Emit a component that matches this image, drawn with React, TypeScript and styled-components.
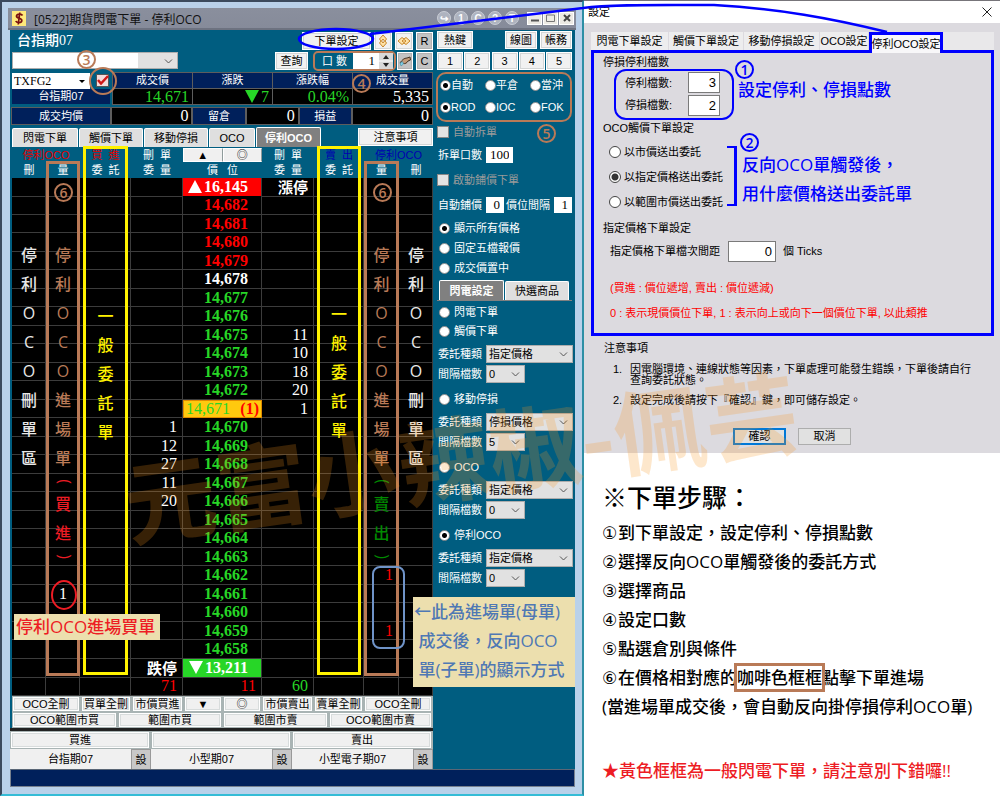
import React from "react";
import styled, { createGlobalStyle, css } from "styled-components";

const TEAL = "#005d80";
const NAVY = "#00205b";
const BROWN = "#b97a57";
const BLUE = "#0000ff";
const YELLOW = "#fff200";
const RED = "#ff0000";
const GREEN = "#27d627";
const LADDER_COLUMNS = "34fr 34fr 51fr 52fr 79fr 52fr 50fr 35fr 34fr";

const ui = `"Liberation Sans", "Noto Sans CJK TC", sans-serif`;
const note = `"Open Sans", "Noto Sans CJK TC", sans-serif`;
const digits = `"Liberation Serif", "Noto Sans CJK TC", serif`;

const GlobalStyle = createGlobalStyle`
  * { box-sizing: border-box; }
  body { margin: 0; background: #fff; }
  button, input, select { font: inherit; margin: 0; padding: 0; border-radius: 0; }
  ul, ol { list-style: none; margin: 0; padding: 0; }
  h1, h2, p { margin: 0; }
`;

const Stage = styled.div`
  position: relative;
  display: grid;
  grid-template-columns: minmax(0, 584fr) minmax(0, 416fr);
  min-height: 100vh;
  overflow: hidden;
  font: 11px/16px ${ui};
`;

/* ---------- trading window ---------- */

const Window = styled.section`
  position: relative;
  display: flex;
  flex-direction: column;
  background: #b9d1ea;
  border: 2px solid #3b4a5e;
  border-right-color: #2d8fa5;
  border-bottom-color: #35bcd6;
  padding: 6px;
`;

const TitleBar = styled.header`
  display: flex;
  align-items: center;
  height: 22px;
  padding: 0 2px 0 4px;
  background: linear-gradient(#8a8f9d, #868b9a);
  border-bottom: 2px solid #6d7280;
`;

const AppIcon = styled.svg`
  width: 14px;
  height: 15px;
  margin-right: 8px;
`;

const WindowTitle = styled.h1`
  flex: 1;
  font: 400 12px/18px ${note};
  padding-top: 4px;
  color: #111;
  white-space: nowrap;
`;

const TitleTools = styled.div`
  display: flex;
  gap: 3px;
`;

const RoundTool = styled.button`
  width: 14px;
  height: 14px;
  border: 1px solid #c9cdd6;
  border-radius: 50%;
  background: #aeb3bf;
  color: #fff;
  font-size: 10px;
  font-weight: 700;
  line-height: 11px;
  text-align: center;
`;

const CaptionButton = styled.button`
  display: grid;
  place-items: center;
  width: 15px;
  height: 13px;
  border: 1px solid #fff;
  background: #eceae4;
  color: #555;
`;

const CaptionGroup = styled.div`
  display: flex;
  gap: 1px;
  margin-left: 8px;
`;

const Body = styled.div`
  display: grid;
  grid-template-columns: minmax(0, 424fr) minmax(0, 141fr);
  margin: 0 1px 0 2px;
  background: ${TEAL};
`;

const StatusBar = styled.footer`
  height: 18px;
  margin: 0 1px 0 2px;
  background: ${NAVY};
  border: 1px solid #77818f;
  border-top-color: #5a6676;
`;

const Main = styled.div`
  display: flex;
  flex-direction: column;
  min-width: 0;
`;

const Bar = styled.div<{ $height: number; $top?: number }>`
  display: flex;
  align-items: center;
  height: ${(p) => p.$height}px;
  margin-top: ${(p) => p.$top ?? 2}px;
  padding: 0 1px 0 2px;
`;

const Product = styled.h2`
  flex: 1;
  padding-left: 5px;
  color: #fff;
  font: 500 14px/18px ${digits};
`;

const Spacer = styled.div`
  flex: 1;
`;

const Button = styled.button<{ $width?: number; $gray?: boolean; $gap?: number }>`
  display: inline-flex;
  align-items: center;
  justify-content: center;
  flex: none;
  width: ${(p) => (p.$width ? p.$width + "px" : "auto")};
  height: 18px;
  margin-left: ${(p) => p.$gap ?? 3}px;
  border: 1px solid #fff;
  background: ${(p) => (p.$gray ? "#c3c3c3" : "#f1f1f1")};
  box-shadow: inset 0 0 0 1px ${(p) => (p.$gray ? "#b2b2b2" : "#d4d6d6")};
  color: #000;
  line-height: 14px;
  white-space: nowrap;
`;

const AccountSelect = styled.div`
  position: relative;
  width: 166px;
  height: 17px;
  background: #e1e1e1;
  border: 1px solid #adadad;
`;

const SelectBox = styled.select`
  display: block;
  width: 100%;
  height: 100%;
  appearance: none;
  border: 0;
  background: transparent;
  padding: 0 2px;
  color: #000;
  line-height: 14px;
`;

const AccountField = styled(SelectBox)`
  background: linear-gradient(90deg, #fff 125px, transparent 125px);
`;

const Chevron = styled.svg`
  position: absolute;
  right: 4px;
  top: 5px;
  width: 9px;
  height: 7px;
  pointer-events: none;
`;

const LotBox = styled.label`
  display: flex;
  align-items: center;
  height: 20px;
  margin-left: 5px;
  padding: 0 1px 0 7px;
  border: 2px solid ${BROWN};
  border-radius: 5px;
  color: #fff;
  gap: 6px;
`;

const Spinner = styled.span`
  display: flex;
  height: 16px;
  background: #fff;
`;

const NumberField = styled.input<{ $width: number; $height?: number }>`
  width: ${(p) => p.$width}px;
  height: ${(p) => p.$height ?? 16}px;
  padding: 0 3px;
  border: 1px solid #fff;
  background: #fff;
  color: #000;
  font: 13px/14px ${digits};
  text-align: right;
`;

const SpinButtons = styled.svg`
  width: 14px;
  height: 16px;
`;

const SymbolCell = styled.div`
  display: flex;
  align-items: center;
  width: 98px;
  height: 17px;
`;

const SymbolSelect = styled.div`
  position: relative;
  width: 78px;
  height: 16px;
  margin-right: 6px;
  background: #fff;
  font: 12px/14px ${digits};
`;

const CheckMark = styled.input`
  appearance: none;
  flex: none;
  width: 13px;
  height: 13px;
  border: 1px solid #555;
  background: #f3dcdc;
`;

const CheckStroke = styled.svg`
  position: absolute;
  left: 95px;
  top: 73px;
  width: 12px;
  height: 10px;
  pointer-events: none;
`;

const QuoteArea = styled.div`
  display: grid;
  grid-template-columns: 100fr 321fr;
  height: 33px;
  margin: 2px 1px 0 2px;
`;

const SymbolColumn = styled.div`
  display: flex;
  flex-direction: column;
`;

const NavyLabel = styled.div`
  height: 15px;
  margin-right: 2px;
  background: ${NAVY};
  color: #fff;
  line-height: 15px;
  text-align: center;
`;

const QuoteTable = styled.table`
  width: 100%;
  table-layout: fixed;
  border-collapse: collapse;
  th, td { border: 1px solid #5d5d5d; padding: 0 3px; height: 16px; }
  th { background: ${NAVY}; color: #fff; font-weight: 400; line-height: 15px; }
  td { background: #000; font: 16px/15px ${digits}; text-align: right; }
`;

const Quote = styled.td<{ $color: string }>`
  color: ${(p) => p.$color};
`;

const Stats = styled.dl`
  display: grid;
  grid-template-columns: 100fr 81fr 53fr 53fr 53fr 81fr;
  height: 18px;
  margin: 2px 1px 0;
  dt { background: ${NAVY}; color: #fff; text-align: center; border: 1px solid #5d5d5d; line-height: 16px; }
  dd { margin: 0; padding-right: 3px; background: #000; color: #fff; text-align: right; border: 1px solid #5d5d5d; font: 16px/16px ${digits}; }
`;

const Tab = styled.button<{ $width: number; $active?: boolean }>`
  width: ${(p) => p.$width}px;
  height: ${(p) => (p.$active ? 20 : 19)}px;
  align-self: flex-end;
  border: 1px solid #fff;
  border-bottom: 0;
  border-radius: 2px 2px 0 0;
  margin-right: 1px;
  background: ${(p) => (p.$active ? "#808080" : "#dfdfdf")};
  color: ${(p) => (p.$active ? "#fff" : "#000")};
  font-weight: ${(p) => (p.$active ? 700 : 400)};
  white-space: nowrap;
`;

/* ---------- price ladder ---------- */

const LadderBox = styled.div`
  position: relative;
  margin: 1px 1px 0 2px;
  background: #000;
`;

const Ladder = styled.table`
  display: block;
  width: 100%;
  thead, tbody { display: block; }
  tr { display: grid; grid-template-columns: ${LADDER_COLUMNS}; height: 19px; }
  tbody tr:nth-child(odd) { height: 18px; }
  tbody tr:last-child { height: 19px; }
  thead tr { height: 15px; background: ${TEAL}; }
  th { padding: 0; color: #fff; font-weight: 400; line-height: 15px; white-space: pre; }
`;

const Head = styled.th<{ $color?: string; $span?: number }>`
  && {
    grid-column: span ${(p) => p.$span ?? 1};
    color: ${(p) => p.$color ?? "#fff"};
  }
`;

const PriceHead = styled.th`
  display: flex;
`;

const HeadButton = styled.button`
  flex: 1;
  height: 14px;
  border: 1px solid #fff;
  border-right-color: #8f9b9b;
  background: #f0f0f0;
  color: #000;
  line-height: 11px;
`;

const Cell = styled.td<{ $color?: string }>`
  padding: 0 5px 0 0;
  border: solid #3c3c3c;
  border-width: 0 1px 1px 0;
  color: ${(p) => p.$color ?? "#fff"};
  font: 500 16px/17px ${digits};
  text-align: right;
  white-space: nowrap;
`;

const CountCell = styled(Cell)<{ $side: "left" | "right" }>`
  padding-right: ${(p) => (p.$side === "left" ? 12 : 5)}px;
`;

const LimitText = styled.b`
  font: 700 15px/17px "Noto Sans CJK TC", sans-serif;
`;

const PriceCell = styled(Cell)<{ $bg?: string }>`
  padding-right: 13px;
  background: ${(p) => p.$bg ?? "#000"};
  font-weight: 700;
`;

const LastPrice = styled(PriceCell)`
  display: flex;
  justify-content: space-between;
  padding: 0 2px;
  border: 1px solid #e08a00;
  font-weight: 400;
  line-height: 16px;
  b { color: #f00; }
`;

const Arrow = styled.svg`
  width: 14px;
  height: 13px;
  margin-right: 2px;
  vertical-align: -1px;
`;

const Overlay = styled.div`
  position: absolute;
  inset: -2px 0 0 0;
  display: grid;
  grid-template-columns: ${LADDER_COLUMNS};
  pointer-events: none;
`;

const Lane = styled.div<{ $col: number; $color: string; $frame?: "wide" | "narrow"; $start: number }>`
  grid-column: ${(p) => p.$col};
  grid-row: 1;
  display: flex;
  flex-direction: column;
  align-items: center;
  margin: ${(p) => (p.$frame === "wide" ? "0 3px 21px" : "15px 0 20px")};
  border: 3px solid ${(p) => (p.$frame ? p.$color : "transparent")};
  padding-top: ${(p) => p.$start}px;
  color: ${(p) => p.$color};
  font: 500 16px/29px ${note};
`;

const Glyph = styled.span<{ $color?: string }>`
  height: 29px;
  color: ${(p) => p.$color ?? "inherit"};
`;

const Paren = styled.span<{ $color: string }>`
  height: 17px;
  width: 17px;
  line-height: 15px;
  text-align: center;
  transform: rotate(90deg);
  color: ${(p) => p.$color};
`;

const ButtonRow = styled.div<{ $columns: string; $height: number }>`
  display: grid;
  grid-template-columns: ${(p) => p.$columns};
  height: ${(p) => p.$height}px;
`;

const LadderButton = styled.button`
  min-width: 0;
  border: solid #a9b4b4;
  border-width: 1px 2px 1px 1px;
  background: #f0f0f0;
  box-shadow: inset 0 0 0 1px #fff, inset 0 0 0 2px #d8dcdc;
  color: #000;
  line-height: 12px;
  white-space: nowrap;
`;

const LadderFoot = styled.div`
  margin: 0 1px 0 2px;
`;

const OrderArea = styled.div`
  margin-right: 1px;
  border-top: 3px solid #222;
`;

const QuickProduct = styled.div`
  display: grid;
  grid-template-columns: 1fr 20px;
  background: #f0f0f0;
  text-align: center;
  line-height: 20px;
  button { border: 1px solid #999; background: #c8c8c8; }
`;

/* ---------- right settings column ---------- */

const Side = styled.aside`
  position: relative;
  display: flex;
  flex-direction: column;
  padding: 1px 3px 0 3px;
  color: #fff;
`;

const SideBar = styled.div<{ $top?: number; $height?: number }>`
  display: flex;
  align-items: center;
  justify-content: space-between;
  height: ${(p) => p.$height ?? 18}px;
  margin-top: ${(p) => p.$top ?? 0}px;
`;

const ConditionBox = styled.div`
  display: grid;
  grid-template-columns: 45fr 45fr 40fr;
  align-content: space-between;
  height: 50px;
  margin: 1px 0 0 -1px;
  padding: 2px 0 4px 2px;
  border: 2px solid ${BROWN};
  border-radius: 10px;
`;

const radioDot = css`
  &:checked { background: radial-gradient(circle, #000 2px, #fff 3px); }
`;

const Radio = styled.input`
  appearance: none;
  flex: none;
  width: 11px;
  height: 11px;
  border: 1px solid #8d8d8d;
  border-radius: 50%;
  background: #fff;
  ${radioDot}
`;

const Choice = styled.label<{ $height?: number; $gap?: number; $dim?: boolean }>`
  display: flex;
  align-items: center;
  gap: ${(p) => p.$gap ?? 0}px;
  height: ${(p) => p.$height ?? 18}px;
  color: ${(p) => (p.$dim ? "#9a9a9a" : "#fff")};
  white-space: nowrap;
`;

const Tick = styled.input`
  appearance: none;
  width: 12px;
  height: 12px;
  border: 1px solid #888;
  background: #e3e3e3;
`;

const SideField = styled.label<{ $height?: number }>`
  display: flex;
  align-items: center;
  gap: 4px;
  height: ${(p) => p.$height ?? 20}px;
  padding-left: 1px;
  white-space: nowrap;
`;

const SideSelect = styled.span<{ $wide?: boolean }>`
  position: relative;
  flex: ${(p) => (p.$wide ? "1" : "none")};
  width: 39px;
  height: 18px;
  border: 1px solid #adadad;
  background: #e1e1e1;
`;

const SideTabs = styled.div`
  display: flex;
  height: 18px;
  padding-left: 2px;
  border-bottom: 1px solid #808080;
  margin: 2px 0 4px;
`;

const RadioGroup = styled.div`
  padding: 0 0 3px 2px;
`;

const ModeFirst = styled.div`
  padding: 0 0 3px 2px;
  margin-bottom: -3px;
`;

const Fields = styled.div`
  margin: 1px -1px 0 -2px;
`;

/* ---------- call-outs ---------- */

const Badge = styled.span<{ $x: number; $y: number; $color: string }>`
  position: absolute;
  left: ${(p) => p.$x}px;
  top: ${(p) => p.$y}px;
  width: 19px;
  height: 19px;
  border: 2px solid ${(p) => p.$color};
  border-radius: 50%;
  color: ${(p) => p.$color};
  font: 600 14px/15px ${note};
  text-align: center;
  pointer-events: none;
`;

const Ring = styled.span<{ $x: number; $y: number; $w: number; $h: number; $color: string; $radius?: string }>`
  position: absolute;
  left: ${(p) => p.$x}px;
  top: ${(p) => p.$y}px;
  width: ${(p) => p.$w}px;
  height: ${(p) => p.$h}px;
  border: 2px solid ${(p) => p.$color};
  border-radius: ${(p) => p.$radius ?? "50%"};
  pointer-events: none;
`;

const BuyNote = styled.p`
  position: absolute;
  left: 2px;
  bottom: 56px;
  padding: 0 5px 0 2px;
  background: #ecdfae;
  color: #ed1c24;
  font: 500 17px/26px ${note};
  white-space: nowrap;
`;

const FillNote = styled.p`
  position: absolute;
  right: 0;
  top: 567px;
  width: 162px;
  padding: 0 0 3px 5px;
  background: #ecdfae;
  color: #4f78b4;
  font: 500 17px/29px ${note};
  white-space: nowrap;
  text-indent: -4px;
`;

const NoteLine = styled.span`
  display: block;
`;

const Connector = styled.svg`
  position: absolute;
  left: 0;
  top: 0;
  width: 100%;
  height: 60px;
  z-index: 2;
  pointer-events: none;
`;

const Watermark = styled.div`
  position: absolute;
  left: 46%;
  top: 453px;
  transform: translate(-50%, -50%) rotate(-8deg);
  color: #fa961e;
  opacity: 0.22;
  font: 700 92px/100px "Noto Sans CJK TC", sans-serif;
  white-space: nowrap;
  pointer-events: none;
`;

/* ---------- settings dialog ---------- */

const RightColumn = styled.div`
  min-width: 0;
`;

const Dialog = styled.section`
  height: 453px;
  border-top: 1px solid #77757a;
  background: #dcdadf;
  color: #000;
`;

const DialogTitle = styled.header`
  display: flex;
  align-items: center;
  justify-content: space-between;
  height: 22px;
  padding: 0 8px 0 4px;
  background: #fff;
`;

const CloseButton = styled.button`
  width: 10px;
  height: 10px;
  border: 0;
  background: none;
  svg { display: block; }
`;

const DialogTabs = styled.div`
  position: relative;
  z-index: 1;
  display: flex;
  align-items: flex-start;
  height: 30px;
  margin: 0 6px 0 7px;
  padding-top: 9px;
`;

const DialogTab = styled.button<{ $width: number; $active?: boolean }>`
  width: ${(p) => p.$width}px;
  height: ${(p) => (p.$active ? 21 : 18)}px;
  border: ${(p) => (p.$active ? `3px solid ${BLUE}` : "solid #dcdadf")};
  border-width: ${(p) => (p.$active ? "3px 3px 0" : "0 1px 0 0")};
  background: ${(p) => (p.$active ? "#f8f7f9" : "#ededee")};
  color: #000;
  line-height: ${(p) => (p.$active ? 12 : 18)}px;
  white-space: nowrap;
`;

const TabLabel = styled.span`
  display: flex;
  justify-content: center;
`;

const TabRest = styled.div`
  flex: 1;
  height: 18px;
  background: #e9e8ea;
`;

const Panel = styled.div`
  position: relative;
  height: 286px;
  margin: -3px 6px 0 7px;
  padding: 1px 0 0 9px;
  border: 3px solid ${BLUE};
`;

const GroupTitle = styled.h2`
  font: 400 11px/16px ${ui};
`;

const TickFields = styled.div`
  width: 120px;
  height: 51px;
  margin: -1px 0 0 11px;
  padding: 0 0 0 9px;
  border: 2px solid ${BLUE};
  border-radius: 12px;
`;

const DialogField = styled.label<{ $label: number; $height: number }>`
  display: grid;
  grid-template-columns: ${(p) => p.$label}px auto 1fr;
  align-items: center;
  height: ${(p) => p.$height}px;
  white-space: nowrap;
`;

const DialogInput = styled(NumberField)`
  border: 1px solid #7a7a7a;
  font: 13px/18px ${ui};
`;

const ChoiceBlock = styled.div`
  padding: 3px 0 6px;
`;

const DialogChoice = styled(Choice)`
  color: #000;
  height: 25px;
  padding-left: 6px;
  gap: 3px;
`;

const DialogRadio = styled(Radio)`
  width: 12px;
  height: 12px;
  border-color: #444;
  &:checked { background: radial-gradient(circle, #333 3px, #fff 4px); }
`;

const Indent = styled.div`
  padding-left: 7px;
`;

const Unit = styled.span`
  padding-left: 7px;
`;

const RedBlock = styled.div`
  padding-top: 10px;
`;

const RedText = styled.p`
  padding-left: 7px;
  color: #f00;
  line-height: 25px;
  white-space: nowrap;
`;

const Remark = styled.div<{ $x: number; $y: number }>`
  position: absolute;
  left: ${(p) => p.$x}px;
  top: ${(p) => p.$y}px;
  color: ${BLUE};
  font: 500 17px/29px ${note};
  white-space: nowrap;
`;

const Bracket = styled.span`
  position: absolute;
  left: 133px;
  top: 93px;
  width: 10px;
  height: 60px;
  border: solid ${BLUE};
  border-width: 2px 3px 2px 0;
`;

const Cautions = styled.div`
  padding: 4px 24px 0 20px;
`;

const CautionList = styled.ol`
  padding: 8px 0 0 9px;
  line-height: 11px;
  li { display: grid; grid-template-columns: 17px 1fr; margin-bottom: 9px; }
`;

const DialogActions = styled.div`
  display: flex;
  justify-content: center;
  gap: 12px;
  padding-top: 13px;
`;

const ActionButton = styled.button<{ $primary?: boolean }>`
  width: 53px;
  height: 17px;
  border: ${(p) => (p.$primary ? "2px solid #0078d7" : "1px solid #adadad")};
  background: #e1e1e1;
  color: #000;
  line-height: 13px;
`;

/* ---------- written steps ---------- */

const Steps = styled.article`
  padding: 24px 0 0 18px;
  color: #000;
  font: 500 17px/29px ${note};
  white-space: nowrap;
`;

const StepsTitle = styled.h2`
  font: 500 25px/40px ${note};
  margin-bottom: 1px;
`;

const StepNumber = styled.span`
  display: inline-block;
  width: 16px;
  font: 500 17px/20px "DejaVu Sans", sans-serif;
`;

const Boxed = styled.span`
  outline: 3px solid ${BROWN};
  outline-offset: 0;
`;

const Warning = styled.p`
  margin-top: 35px;
  color: #ed1c24;
`;

/* ---------- data ---------- */

type Row = { price: string; color: string; bid?: string; ask?: string };

const bids: Record<number, string> = { 14670: "1", 14669: "12", 14668: "27", 14667: "11", 14666: "20" };
const asks: Record<number, string> = { 14675: "11", 14674: "10", 14673: "18", 14672: "20", 14671: "1" };

const rows: Row[] = Array.from({ length: 25 }, (_, i) => {
  const value = 14682 - i;
  return {
    price: value.toLocaleString("en-US"),
    color: value > 14678 ? RED : value === 14678 ? "#fff" : GREEN,
    bid: bids[value],
    ask: asks[value],
  };
});

const triggerGroups = [
  { name: "觸價下單", kind: "指定價格", ticks: "0" },
  { name: "移動停損", kind: "停損價格", ticks: "5" },
  { name: "OCO", kind: "指定價格", ticks: "0" },
  { name: "停利OCO", kind: "指定價格", ticks: "0" },
];

const Down = () => (
  <Chevron viewBox="0 0 9 7" fill="none" stroke="#555">
    <path d="M1 1.5 4.5 5 8 1.5" />
  </Chevron>
);

const Diamond = ({ wide }: { wide?: boolean }) => (
  <svg width="14" height="14" viewBox="0 0 14 14" fill="#ffe3a8" stroke="#c8862a">
    {wide ? (
      <path d="M1 7 5 3.5 7 5 9 3.5 13 7 9 10.5 7 9 5 10.5Z M5 7 7 5.5 9 7 7 8.5Z" />
    ) : (
      <path d="M7 1 10.500 5 9 7 10.500 9 7 13 3.500 9 5 7 3.500 5Z M7 5 5.500 7 7 9 8.500 7Z" />
    )}
  </svg>
);

const Triangle = ({ up, color }: { up?: boolean; color: string }) => (
  <Arrow viewBox="0 0 14 13" fill={color}>
    <path d={up ? "M7 0 14 13H0Z" : "M0 0H14L7 13Z"} />
  </Arrow>
);

const LadderRow = ({ row }: { row: Row }) => (
  <tr>
    <Cell />
    <CountCell $side="left">{row.price === "14,661" ? "1" : ""}</CountCell>
    <Cell />
    <Cell>{row.bid}</Cell>
    {row.price === "14,671" ? (
      <LastPrice $color={GREEN} $bg="#ffc90e">
        {row.price}
        <b>(1)</b>
      </LastPrice>
    ) : (
      <PriceCell $color={row.color}>{row.price}</PriceCell>
    )}
    <Cell>{row.ask}</Cell>
    <Cell />
    <CountCell $side="right" $color={RED}>
      {row.price === "14,662" || row.price === "14,659" ? "1" : ""}
    </CountCell>
    <Cell />
  </tr>
);

const Letters = ({ text, color }: { text: string; color?: string }) => (
  <>
    {Array.from(text).map((ch, i) => (
      <Glyph key={i} $color={color}>
        {ch}
      </Glyph>
    ))}
  </>
);

const EntryLane = ({ col, side, color }: { col: number; side: string; color: string }) => (
  <Lane $col={col} $color={BROWN} $frame="narrow" $start={77}>
    <Letters text="停利OCO進場單" />
    <Paren $color={color}>(</Paren>
    <Letters text={side} color={color} />
    <Paren $color={color}>)</Paren>
  </Lane>
);

const SidePanel = () => (
  <Side>
    <SideBar>
      <Button $width={36} $gap={0}>熱鍵</Button>
      <Spacer />
      <Button $width={32}>線圖</Button>
      <Button $width={32}>帳務</Button>
    </SideBar>
    <SideBar $top={2} $height={20}>
      {["1", "2", "3", "4", "5"].map((n) => (
        <Button key={n} $width={26} $gap={0}>{n}</Button>
      ))}
    </SideBar>
    <ConditionBox>
      {["自動", "平倉", "當沖"].map((t) => (
        <Choice key={t}>
          <Radio type="radio" name="position" defaultChecked={t === "自動"} />
          {t}
        </Choice>
      ))}
      {["ROD", "IOC", "FOK"].map((t) => (
        <Choice key={t}>
          <Radio type="radio" name="validity" defaultChecked={t === "ROD"} />
          {t}
        </Choice>
      ))}
    </ConditionBox>
    <Choice $height={20} $gap={4} $dim>
      <Tick type="checkbox" disabled />
      自動拆單
    </Choice>
    <SideField $height={26}>
      拆單口數
      <NumberField $width={27} defaultValue="100" />
    </SideField>
    <Choice $height={24} $gap={4} $dim>
      <Tick type="checkbox" disabled />
      啟動鋪價下單
    </Choice>
    <SideBar $height={26}>
      <SideField>
        自動鋪價
        <NumberField $width={18} defaultValue="0" />
      </SideField>
      <SideField>
        價位間隔
        <NumberField $width={18} defaultValue="1" />
      </SideField>
    </SideBar>
    <RadioGroup>
      {["顯示所有價格", "固定五檔報價", "成交價置中"].map((t, i) => (
        <Choice key={t} $height={20} $gap={4}>
          <Radio type="radio" name="view" defaultChecked={i === 0} />
          {t}
        </Choice>
      ))}
    </RadioGroup>
    <SideTabs>
      <Tab $width={65} $active>閃電設定</Tab>
      <Tab $width={64}>快選商品</Tab>
    </SideTabs>
    <ModeFirst>
      <Choice $height={14} $gap={4}>
        <Radio type="radio" name="mode" />
        閃電下單
      </Choice>
    </ModeFirst>
    {triggerGroups.map((g) => (
      <RadioGroup key={g.name}>
        <Choice $height={24} $gap={4}>
          <Radio type="radio" name="mode" defaultChecked={g.name === "停利OCO"} />
          {g.name}
        </Choice>
        <Fields>
          <SideField>
            委託種類
            <SideSelect $wide>
              <SelectBox>
                <option>{g.kind}</option>
              </SelectBox>
              <Down />
            </SideSelect>
          </SideField>
          <SideField>
            間隔檔數
            <SideSelect>
              <SelectBox>
                <option>{g.ticks}</option>
              </SelectBox>
              <Down />
            </SideSelect>
          </SideField>
        </Fields>
      </RadioGroup>
    ))}
    <Badge $x={103} $y={94} $color={BROWN}>5</Badge>
    <FillNote>
      <NoteLine>←此為進場單(母單)</NoteLine>
      <NoteLine>&nbsp;成交後，反向OCO</NoteLine>
      <NoteLine>&nbsp;單(子單)的顯示方式</NoteLine>
    </FillNote>
  </Side>
);

const TradingWindow = () => (
  <Window>
    <TitleBar>
      <AppIcon viewBox="0 0 14 15">
        <rect width="14" height="15" fill="#ffe97a" />
        <path d="M10.500 4.500C9.500 2.500 5 2.500 4.500 5 4.200 7.500 10 6.800 9.800 9.600 9.500 12.300 4.500 12 3.800 10M7.800 1.500 6.200 13.500" fill="none" stroke="#7a1010" strokeWidth="1.700" />
      </AppIcon>
      <WindowTitle>[0522]期貨閃電下單 - 停利OCO</WindowTitle>
      <TitleTools>
        {["↪", "1", "C", "?", "T"].map((t) => (
          <RoundTool key={t}>{t}</RoundTool>
        ))}
      </TitleTools>
      <CaptionGroup>
        <CaptionButton aria-label="Minimize">
          <svg width="8" height="8" viewBox="0 0 8 8"><path d="M0 6.500H8" stroke="#555" strokeWidth="2" /></svg>
        </CaptionButton>
        <CaptionButton aria-label="Maximize">
          <svg width="9" height="8" viewBox="0 0 9 8"><path d="M.5 1H8.500V7.500H.5Z" fill="none" stroke="#777" /></svg>
        </CaptionButton>
        <CaptionButton aria-label="Close">
          <svg width="8" height="8" viewBox="0 0 8 8"><path d="M1 1 7 7M7 1 1 7" stroke="#444" strokeWidth="2" /></svg>
        </CaptionButton>
      </CaptionGroup>
    </TitleBar>
    <Body>
      <Main>
        <Bar $height={19} $top={1}>
          <Product>台指期07</Product>
          <Button $width={69}>下單設定</Button>
          <Button $width={18} aria-label="Vertical"><Diamond /></Button>
          <Button $width={18} aria-label="Horizontal"><Diamond wide /></Button>
          <Button $width={17} $gray>R</Button>
        </Bar>
        <Bar $height={19} $top={1}>
          <AccountSelect>
            <AccountField aria-label="帳號">
              <option></option>
            </AccountField>
            <Down />
          </AccountSelect>
          <Spacer />
          <Button $width={33}>查詢</Button>
          <LotBox>
            口 數
            <Spinner>
              <NumberField $width={26} defaultValue="1" />
              <SpinButtons viewBox="0 0 14 16">
                <path d="M0 0H14V16H0Z" fill="#d8d8d8" />
                <path d="M0 8H14" stroke="#fff" />
                <path d="M7 2 10 6H4ZM7 14 4 10H10Z" fill="#222" />
              </SpinButtons>
            </Spinner>
          </LotBox>
          <Button $width={16} $gray $gap={1} aria-label="Hand">
            <svg width="12" height="12" viewBox="0 0 12 12">
              <path d="M1 8C3 5 5 3 8 3L11 2 11.500 5 9 6C8 8 6 9 4.500 8.500Z" fill="#c39a78" stroke="#443322" />
              <path d="M1 8 3.500 6.500 4.500 9 2 11Z" fill="#7fd0e8" stroke="#3a7a90" strokeWidth=".5" />
            </svg>
          </Button>
          <Button $width={17} $gray>C</Button>
        </Bar>
        <QuoteArea>
          <SymbolColumn>
            <SymbolCell>
              <SymbolSelect>
                <SelectBox aria-label="商品">
                  <option>TXFG2</option>
                </SelectBox>
                <Chevron viewBox="0 0 9 7"><path d="M2 2H8L5 5Z" fill="#000" /></Chevron>
              </SymbolSelect>
              <CheckMark type="checkbox" defaultChecked aria-label="鎖定商品" />
            </SymbolCell>
            <NavyLabel>台指期07</NavyLabel>
          </SymbolColumn>
          <QuoteTable>
            <thead>
              <tr><th>成交價</th><th>漲跌</th><th>漲跌幅</th><th>成交量</th></tr>
            </thead>
            <tbody>
              <tr>
                <Quote $color={GREEN}>14,671</Quote>
                <Quote $color={GREEN}><Triangle color={GREEN} />7</Quote>
                <Quote $color={GREEN}>0.04%</Quote>
                <Quote $color="#fff">5,335</Quote>
              </tr>
            </tbody>
          </QuoteTable>
        </QuoteArea>
        <Stats>
          <dt>成交均價</dt><dd>0</dd>
          <dt>留倉</dt><dd>0</dd>
          <dt>損益</dt><dd>0</dd>
        </Stats>
        <Bar $height={20}>
          <Tab $width={66}>閃電下單</Tab>
          <Tab $width={64}>觸價下單</Tab>
          <Tab $width={64}>移動停損</Tab>
          <Tab $width={46}>OCO</Tab>
          <Tab $width={65} $active>停利OCO</Tab>
          <Spacer />
          <Button $width={75}>注意事項</Button>
        </Bar>
        <LadderBox>
          <Ladder>
            <thead>
              <tr>
                <Head $span={2} $color="#e00000">停利OCO</Head>
                <Head $color="#e00000">買  進</Head>
                <Head>刪  單</Head>
                <PriceHead>
                  <HeadButton>▲</HeadButton>
                  <HeadButton>◎</HeadButton>
                </PriceHead>
                <Head>刪  單</Head>
                <Head $color="#0000b0">賣  出</Head>
                <Head $span={2} $color="#0000b0">停利OCO</Head>
              </tr>
              <tr>
                <Head>刪</Head>
                <Head>量</Head>
                <Head>委  託</Head>
                <Head>委  量</Head>
                <Head>價   位</Head>
                <Head>委  量</Head>
                <Head>委  託</Head>
                <Head>量</Head>
                <Head>刪</Head>
              </tr>
            </thead>
            <tbody>
              <tr>
                <Cell /><Cell /><Cell /><Cell />
                <PriceCell $bg={RED}><Triangle up color="#fff" />16,145</PriceCell>
                <Cell><LimitText>漲停</LimitText></Cell>
                <Cell /><Cell /><Cell />
              </tr>
              {rows.map((r) => (
                <LadderRow key={r.price} row={r} />
              ))}
              <tr>
                <Cell /><Cell /><Cell />
                <Cell><LimitText>跌停</LimitText></Cell>
                <PriceCell $bg={GREEN}><Triangle color="#fff" />13,211</PriceCell>
                <Cell /><Cell /><Cell /><Cell />
              </tr>
              <tr>
                <Cell /><Cell /><Cell />
                <Cell $color={RED}>71</Cell>
                <Cell $color={RED}>11</Cell>
                <Cell $color={GREEN}>60</Cell>
                <Cell /><Cell /><Cell />
              </tr>
            </tbody>
          </Ladder>
          <Overlay>
            <Lane $col={1} $color="#e8e8e8" $start={77}>
              <Letters text="停利OCO刪單區" />
            </Lane>
            <EntryLane col={2} side="買進" color="#ed1c24" />
            <Lane $col={3} $color={YELLOW} $frame="wide" $start={153}>
              <Letters text="一般委託單" />
            </Lane>
            <Lane $col={7} $color={YELLOW} $frame="wide" $start={151}>
              <Letters text="一般委託單" />
            </Lane>
            <EntryLane col={8} side="賣出" color="#008a00" />
            <Lane $col={9} $color="#e8e8e8" $start={77}>
              <Letters text="停利OCO刪單區" />
            </Lane>
          </Overlay>
          <Badge $x={42} $y={35} $color={BROWN}>6</Badge>
          <Badge $x={361} $y={35} $color={BROWN}>6</Badge>
          <Ring $x={39} $y={432} $w={26} $h={30} $color="#ed1c24" />
          <Ring $x={360} $y={418} $w={33} $h={83} $color="#6f93c8" $radius="8px" />
          <BuyNote>停利OCO進場買單</BuyNote>
        </LadderBox>
        <LadderFoot>
          <ButtonRow $height={16} $columns="69fr 51fr 52fr 39fr 39fr 52fr 50fr 69fr">
            {["OCO全刪", "買單全刪", "市價買進", "▼", "◎", "市價賣出", "賣單全刪", "OCO全刪"].map((t, i) => (
              <LadderButton key={i}>{t}</LadderButton>
            ))}
          </ButtonRow>
          <ButtonRow $height={16} $columns="106fr 105fr 106fr 104fr">
            {["OCO範圍市買", "範圍市買", "範圍市賣", "OCO範圍市賣"].map((t) => (
              <LadderButton key={t}>{t}</LadderButton>
            ))}
          </ButtonRow>
        </LadderFoot>
        <OrderArea>
          <ButtonRow $height={18} $columns="1fr 1fr 1fr">
            <LadderButton>買進</LadderButton>
            <LadderButton aria-label="blank" />
            <LadderButton>賣出</LadderButton>
          </ButtonRow>
          <ButtonRow $height={20} $columns="1fr 1fr 1fr">
            {["台指期07", "小型期07", "小型電子期07"].map((t) => (
              <QuickProduct key={t}>
                {t}
                <button>設</button>
              </QuickProduct>
            ))}
          </ButtonRow>
        </OrderArea>
      </Main>
      <SidePanel />
    </Body>
    <StatusBar />
    <Badge $x={75} $y={48} $color={BROWN}>3</Badge>
    <Badge $x={350} $y={72} $color={BROWN}>4</Badge>
    <Ring $x={87} $y={65} $w={28} $h={28} $color={BROWN} />
    <CheckStroke viewBox="0 0 12 10">
      <path d="M1 5 4 8.500 11 1" fill="none" stroke="#d01818" strokeWidth="2.500" />
    </CheckStroke>
  </Window>
);

const SettingsDialog = () => (
  <Dialog>
    <DialogTitle>
      設定
      <CloseButton aria-label="Close">
        <svg width="10" height="10" viewBox="0 0 10 10"><path d="M.5.5 9.500 9.500M9.500.5.5 9.500" stroke="#222" /></svg>
      </CloseButton>
    </DialogTitle>
    <DialogTabs>
      <DialogTab $width={78}>閃電下單設定</DialogTab>
      <DialogTab $width={75}>觸價下單設定</DialogTab>
      <DialogTab $width={76}>移動停損設定</DialogTab>
      <DialogTab $width={49}><TabLabel>OCO設定</TabLabel></DialogTab>
      <DialogTab $width={74} $active><TabLabel>停利OCO設定</TabLabel></DialogTab>
      <TabRest />
    </DialogTabs>
    <Panel>
      <GroupTitle>停損停利檔數</GroupTitle>
      <TickFields>
        <DialogField $label={63} $height={23}>
          停利檔數:
          <DialogInput $width={32} $height={21} defaultValue="3" />
        </DialogField>
        <DialogField $label={63} $height={22}>
          停損檔數:
          <DialogInput $width={32} $height={21} defaultValue="2" />
        </DialogField>
      </TickFields>
      <GroupTitle>OCO觸價下單設定</GroupTitle>
      <ChoiceBlock>
        {["以市價送出委託", "以指定價格送出委託", "以範圍市價送出委託"].map((t, i) => (
          <DialogChoice key={t}>
            <DialogRadio type="radio" name="oco" defaultChecked={i === 1} />
            {t}
          </DialogChoice>
        ))}
      </ChoiceBlock>
      <GroupTitle>指定價格下單設定</GroupTitle>
      <Indent>
        <DialogField $label={118} $height={30}>
          指定價格下單檔次間距
          <DialogInput $width={48} $height={21} defaultValue="0" />
          <Unit>個 Ticks</Unit>
        </DialogField>
      </Indent>
      <RedBlock>
        <RedText>(買進 : 價位遞增, 賣出 : 價位遞減)</RedText>
        <RedText>0 : 表示現價價位下單, 1 : 表示向上或向下一個價位下單, 以此類推</RedText>
      </RedBlock>
      <Badge $x={141} $y={7} $color={BLUE}>1</Badge>
      <Remark $x={144} $y={22}>設定停利、停損點數</Remark>
      <Badge $x={146} $y={80} $color={BLUE}>2</Badge>
      <Remark $x={148} $y={97}>
        <NoteLine>反向OCO單觸發後，</NoteLine>
        <NoteLine>用什麼價格送出委託單</NoteLine>
      </Remark>
      <Bracket />
    </Panel>
    <Cautions>
      <GroupTitle>注意事項</GroupTitle>
      <CautionList>
        <li>
          <span>1.</span>
          <span>因電腦環境、連線狀態等因素，下單處理可能發生錯誤，下單後請自行查詢委託狀態。</span>
        </li>
        <li>
          <span>2.</span>
          <span>設定完成後請按下『確認』鍵，即可儲存設定。</span>
        </li>
      </CautionList>
    </Cautions>
    <DialogActions>
      <ActionButton $primary>確認</ActionButton>
      <ActionButton>取消</ActionButton>
    </DialogActions>
  </Dialog>
);

const StepsNote = () => (
  <Steps>
    <StepsTitle>※下單步驟：</StepsTitle>
    <p><StepNumber>①</StepNumber>到下單設定，設定停利、停損點數</p>
    <p><StepNumber>②</StepNumber>選擇反向OCO單觸發後的委託方式</p>
    <p><StepNumber>③</StepNumber>選擇商品</p>
    <p><StepNumber>④</StepNumber>設定口數</p>
    <p><StepNumber>⑤</StepNumber>點選倉別與條件</p>
    <p><StepNumber>⑥</StepNumber>在價格相對應的<Boxed>咖啡色框框</Boxed>點擊下單進場</p>
    <p>(當進場單成交後，會自動反向掛停損停利OCO單)</p>
    <Warning>★黃色框框為一般閃電下單，請注意別下錯囉!!</Warning>
  </Steps>
);

export default function App() {
  return (
    <>
      <GlobalStyle />
      <Stage>
        <TradingWindow />
        <RightColumn>
          <SettingsDialog />
          <StepsNote />
        </RightColumn>
        <Connector viewBox="0 0 1000 60" preserveAspectRatio="none" fill="none" stroke={BLUE} strokeWidth="2.500">
          <ellipse cx="336" cy="39" rx="37" ry="10" />
          <path d="M370 34 583 8C610 4 660 5 714 5 780 9 830 18 887 32" />
        </Connector>
        <Watermark>元富小辣椒-佩芸</Watermark>
      </Stage>
    </>
  );
}
